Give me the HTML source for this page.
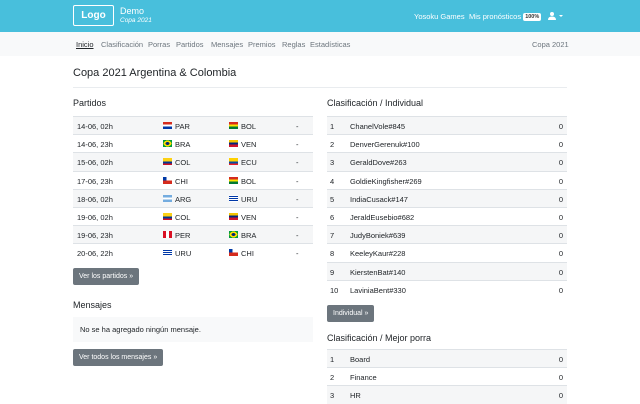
<!DOCTYPE html>
<html><head><meta charset="utf-8"><style>
*{box-sizing:border-box;margin:0;padding:0}
body{width:640px;height:400px;overflow:hidden;background:#fff;font-family:"Liberation Sans",sans-serif;color:#212529;position:relative}
.hdr{position:absolute;left:0;top:0;width:640px;height:32px;background:#48bfdc;color:#fff}
.logo{position:absolute;left:73px;top:5px;width:41px;height:21px;border:1px solid #fff;border-radius:2px;font-size:10px;font-weight:bold;text-align:center;line-height:19px}
.demo{position:absolute;left:120px;top:6px;font-size:9px;line-height:10px}
.demo i{font-size:6.5px;display:block}
.hr{position:absolute;top:12px;font-size:7.5px}
.badge{display:inline-block;background:#fff;color:#333;font-size:5.5px;font-weight:bold;padding:1px 2px;border-radius:2px;vertical-align:1px}
.sub{position:absolute;left:0;top:32px;width:640px;height:24px;background:#f8f9fa;font-size:7.5px;color:#6c757d}
.sub span{position:absolute;top:8px}
h1{position:absolute;left:73px;top:67px;font-size:11px;font-weight:normal}
.line{position:absolute;left:73px;top:87px;width:494px;height:1px;background:#e9ecef}
h2{position:absolute;font-size:9px;font-weight:normal}
.t{position:absolute;width:240px;font-size:7.5px;color:#212529}
.t div{height:18.2px;border-top:1px solid #dee2e6;position:relative}
.t div:nth-child(odd){background:#f5f6f7}
.t span{position:absolute;top:5px}
.f{display:inline-block;width:9px;height:7px;position:absolute;top:5px}
.btn{position:absolute;background:#6c757d;color:#fff;font-size:7px;border-radius:2px;height:17px;line-height:17px;padding:0 6px}
.msg{position:absolute;left:73px;top:317px;width:240px;height:25px;background:#f8f9fa;font-size:7.5px;padding:8px 7px}
</style></head><body>
<div class="hdr">
<div class="logo">Logo</div>
<div class="demo">Demo<i>Copa 2021</i></div>
<span class="hr" style="left:414px">Yosoku Games</span>
<span class="hr" style="left:469px">Mis pronósticos <span class="badge">100%</span></span>
<svg style="position:absolute;left:548px;top:12px" width="18" height="8" viewBox="0 0 18 8"><circle cx="4" cy="2" r="2" fill="#fff"/><path d="M0 8 Q0 4.5 4 4.5 Q8 4.5 8 8Z" fill="#fff"/><path d="M11 3 L15 3 L13 5Z" fill="#fff"/></svg>
</div>
<div class="sub">
<span style="left:76px;color:#212529;text-decoration:underline">Inicio</span>
<span style="left:101px">Clasificación</span>
<span style="left:148px">Porras</span>
<span style="left:176px">Partidos</span>
<span style="left:211px">Mensajes</span>
<span style="left:248px">Premios</span>
<span style="left:282px">Reglas</span>
<span style="left:310px">Estadísticas</span>
<span style="left:532px">Copa 2021</span>
</div>
<h1>Copa 2021 Argentina &amp; Colombia</h1>
<div class="line"></div>
<h2 style="left:73px;top:98px">Partidos</h2>
<h2 style="left:327px;top:98px">Clasificación / Individual</h2>
<div class="t" style="left:73px;top:116px">
<div><span style="left:4px">14-06, 02h</span><i class="f" style="left:90px;background:linear-gradient(#d52b1e 33%,#fff 33% 66%,#0038a8 66%)"></i><span style="left:102px">PAR</span><i class="f" style="left:156px;background:linear-gradient(#d52b1e 33%,#f9e300 33% 66%,#007934 66%)"></i><span style="left:168px">BOL</span><span style="left:223px">-</span></div>
<div><span style="left:4px">14-06, 23h</span><i class="f" style="left:90px;background:radial-gradient(#002776 30%,#fedf00 32% 60%,#009c3b 62%)"></i><span style="left:102px">BRA</span><i class="f" style="left:156px;background:linear-gradient(#f4c300 33%,#00247d 33% 66%,#cf142b 66%)"></i><span style="left:168px">VEN</span><span style="left:223px">-</span></div>
<div><span style="left:4px">15-06, 02h</span><i class="f" style="left:90px;background:linear-gradient(#fcd116 50%,#003893 50% 75%,#ce1126 75%)"></i><span style="left:102px">COL</span><i class="f" style="left:156px;background:linear-gradient(#ffd100 50%,#034ea2 50% 75%,#ed1c24 75%)"></i><span style="left:168px">ECU</span><span style="left:223px">-</span></div>
<div><span style="left:4px">17-06, 23h</span><i class="f" style="left:90px;background:linear-gradient(90deg,#0039a6 40%,#fff 40%) top/100% 50% no-repeat,#d52b1e"></i><span style="left:102px">CHI</span><i class="f" style="left:156px;background:linear-gradient(#d52b1e 33%,#f9e300 33% 66%,#007934 66%)"></i><span style="left:168px">BOL</span><span style="left:223px">-</span></div>
<div><span style="left:4px">18-06, 02h</span><i class="f" style="left:90px;background:linear-gradient(#74acdf 33%,#fff 33% 66%,#74acdf 66%)"></i><span style="left:102px">ARG</span><i class="f" style="left:156px;background:repeating-linear-gradient(#fff 0 1px,#0038a8 1px 2px)"></i><span style="left:168px">URU</span><span style="left:223px">-</span></div>
<div><span style="left:4px">19-06, 02h</span><i class="f" style="left:90px;background:linear-gradient(#fcd116 50%,#003893 50% 75%,#ce1126 75%)"></i><span style="left:102px">COL</span><i class="f" style="left:156px;background:linear-gradient(#f4c300 33%,#00247d 33% 66%,#cf142b 66%)"></i><span style="left:168px">VEN</span><span style="left:223px">-</span></div>
<div><span style="left:4px">19-06, 23h</span><i class="f" style="left:90px;background:linear-gradient(90deg,#d91023 33%,#fff 33% 66%,#d91023 66%)"></i><span style="left:102px">PER</span><i class="f" style="left:156px;background:radial-gradient(#002776 30%,#fedf00 32% 60%,#009c3b 62%)"></i><span style="left:168px">BRA</span><span style="left:223px">-</span></div>
<div><span style="left:4px">20-06, 22h</span><i class="f" style="left:90px;background:repeating-linear-gradient(#fff 0 1px,#0038a8 1px 2px)"></i><span style="left:102px">URU</span><i class="f" style="left:156px;background:linear-gradient(90deg,#0039a6 40%,#fff 40%) top/100% 50% no-repeat,#d52b1e"></i><span style="left:168px">CHI</span><span style="left:223px">-</span></div>
</div>
<div class="btn" style="left:73px;top:268px">Ver los partidos »</div>
<h2 style="left:73px;top:300px">Mensajes</h2>
<div class="msg">No se ha agregado ningún mensaje.</div>
<div class="btn" style="left:73px;top:349px">Ver todos los mensajes »</div>
<div class="t" style="left:327px;top:116px">
<div><span style="left:3px">1</span><span style="left:23px">ChanelVole#845</span><span style="right:4px">0</span></div>
<div><span style="left:3px">2</span><span style="left:23px">DenverGerenuk#100</span><span style="right:4px">0</span></div>
<div><span style="left:3px">3</span><span style="left:23px">GeraldDove#263</span><span style="right:4px">0</span></div>
<div><span style="left:3px">4</span><span style="left:23px">GoldieKingfisher#269</span><span style="right:4px">0</span></div>
<div><span style="left:3px">5</span><span style="left:23px">IndiaCusack#147</span><span style="right:4px">0</span></div>
<div><span style="left:3px">6</span><span style="left:23px">JeraldEusebio#682</span><span style="right:4px">0</span></div>
<div><span style="left:3px">7</span><span style="left:23px">JudyBoniek#639</span><span style="right:4px">0</span></div>
<div><span style="left:3px">8</span><span style="left:23px">KeeleyKaur#228</span><span style="right:4px">0</span></div>
<div><span style="left:3px">9</span><span style="left:23px">KierstenBat#140</span><span style="right:4px">0</span></div>
<div><span style="left:3px">10</span><span style="left:23px">LaviniaBent#330</span><span style="right:4px">0</span></div>
</div>
<div class="btn" style="left:327px;top:305px">Individual »</div>
<h2 style="left:327px;top:333px">Clasificación / Mejor porra</h2>
<div class="t" style="left:327px;top:349px">
<div><span style="left:3px">1</span><span style="left:23px">Board</span><span style="right:4px">0</span></div>
<div><span style="left:3px">2</span><span style="left:23px">Finance</span><span style="right:4px">0</span></div>
<div><span style="left:3px">3</span><span style="left:23px">HR</span><span style="right:4px">0</span></div>
</div>
</body></html>
